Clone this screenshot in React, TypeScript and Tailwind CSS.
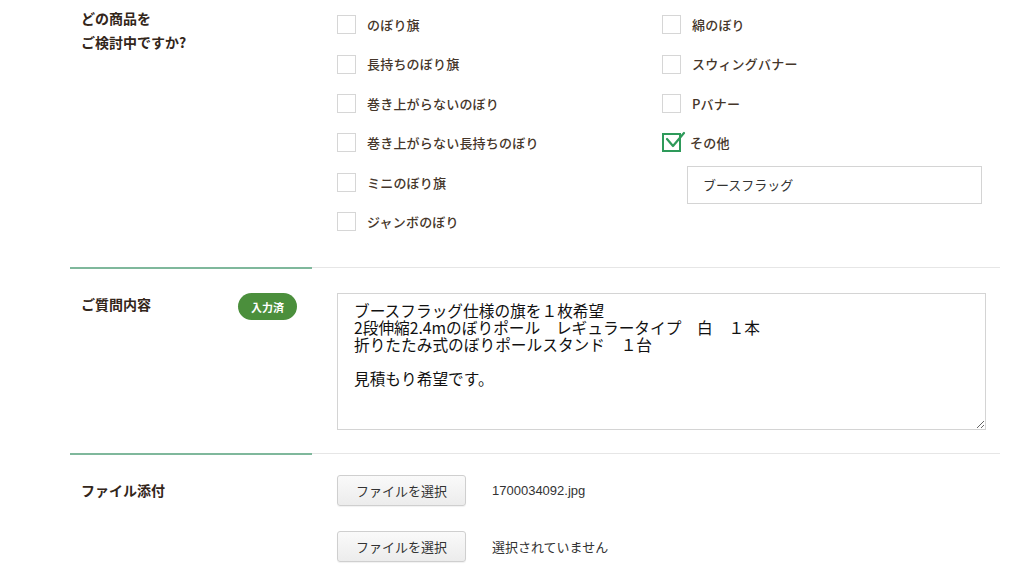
import { useState } from 'react';

const leftItems = [
  { label: 'のぼり旗', checked: false },
  { label: '長持ちのぼり旗', checked: false },
  { label: '巻き上がらないのぼり', checked: false },
  { label: '巻き上がらない長持ちのぼり', checked: false },
  { label: 'ミニのぼり旗', checked: false },
  { label: 'ジャンボのぼり', checked: false },
];

const rightItems = [
  { label: '綿のぼり', checked: false },
  { label: 'スウィングバナー', checked: false },
  { label: 'Pバナー', checked: false },
  { label: 'その他', checked: true },
];

const message = `ブースフラッグ仕様の旗を１枚希望
2段伸縮2.4mのぼりポール　レギュラータイプ　白　１本
折りたたみ式のぼりポールスタンド　１台

見積もり希望です。`;

function CheckRow({ label, checked }: { label: string; checked: boolean }) {
  return (
    <div className="flex items-center h-[39.4px]">
      {checked ? (
        <div className="relative w-[19px] h-[19px] border-2 border-[#2e9a5a] bg-white">
          {/* check mark spills over the box edge */}
          <svg className="absolute -left-[2px] -top-[6px]" width="26" height="24" viewBox="0 0 26 24" fill="none">
            <path d="M5 10 L11 17 L22 4" stroke="#2e9a5a" strokeWidth="2.2" strokeLinecap="round" strokeLinejoin="round" />
          </svg>
        </div>
      ) : (
        <div className="w-[19px] h-[19px] border border-[#d6d6d6] bg-white" />
      )}
      <span className={`${checked ? 'ml-[9px]' : 'ml-[11px]'} text-[13px] font-medium text-[#45362a] tracking-[0.2px]`}>
        {label}
      </span>
    </div>
  );
}

function Divider() {
  return (
    <div className="flex h-[2px]">
      <div className="w-[242px] bg-[#7fb89c]" />
      <div className="flex-1 h-[1px] bg-[#e6e6e6]" />
    </div>
  );
}

function FileButton() {
  return (
    <button className="w-[129px] h-[31px] rounded-[3px] border border-[#cfcfcf] bg-gradient-to-b from-[#fafafa] to-[#ececec] text-[13px] text-[#333] shadow-[0_1px_1px_rgba(0,0,0,0.06)]">
      ファイルを選択
    </button>
  );
}

export default function App() {
  const [other, setOther] = useState('ブースフラッグ');

  return (
    <div className="w-[1024px] h-[570px] bg-white overflow-hidden font-['Noto_Sans_CJK_JP','Noto_Sans',sans-serif]">
      <div className="ml-[70px] w-[930px]">
        {/* Products */}
        <div className="flex pt-[5px] pb-[26px]">
          <div className="w-[267px] pl-[11px] pt-[1px]">
            <h3 className="text-[14px] leading-[24px] font-bold text-[#33261a]">
              どの商品を
              <br />
              ご検討中ですか?
            </h3>
          </div>
          <div className="flex">
            <div className="w-[325px] flex flex-col">
              {leftItems.map((it) => (
                <CheckRow key={it.label} {...it} />
              ))}
            </div>
            <div className="flex flex-col">
              {rightItems.map((it) => (
                <CheckRow key={it.label} {...it} />
              ))}
              <input
                value={other}
                onChange={(e) => setOther(e.target.value)}
                className="mt-[3px] ml-[25px] w-[295px] h-[38px] border border-[#d4d4d4] px-[15px] text-[13px] text-[#333] outline-none"
              />
            </div>
          </div>
        </div>

        <Divider />

        {/* Question */}
        <div className="flex pt-[24px] pb-[23px]">
          <div className="w-[267px] pl-[11px] flex items-start">
            <h3 className="w-[157px] text-[14px] leading-[20px] mt-[1px] font-bold text-[#33261a]">ご質問内容</h3>
            <span className="w-[59px] h-[27px] rounded-full bg-[#4b8f3c] text-white text-[11px] font-bold flex items-center justify-center">
              入力済
            </span>
          </div>
          <textarea
            defaultValue={message}
            className="w-[649px] h-[137px] border border-[#d4d4d4] pl-[16px] pr-[10px] pt-[8px] text-[15.7px] leading-[17px] text-[#111] outline-none resize-y"
          />
        </div>

        <Divider />

        {/* Attachments */}
        <div className="flex pt-[20px]">
          <div className="w-[267px] pl-[11px] pt-[5px]">
            <h3 className="text-[14px] leading-[20px] font-bold text-[#33261a]">ファイル添付</h3>
          </div>
          <div className="flex flex-col gap-[25px]">
            <div className="flex items-center gap-[26px]">
              <FileButton />
              <span className="text-[13px] text-[#333] font-['Liberation_Sans','Noto_Sans_CJK_JP',sans-serif]">1700034092.jpg</span>
            </div>
            <div className="flex items-center gap-[26px]">
              <FileButton />
              <span className="text-[13px] text-[#333]">選択されていません</span>
            </div>
          </div>
        </div>
      </div>
    </div>
  );
}
